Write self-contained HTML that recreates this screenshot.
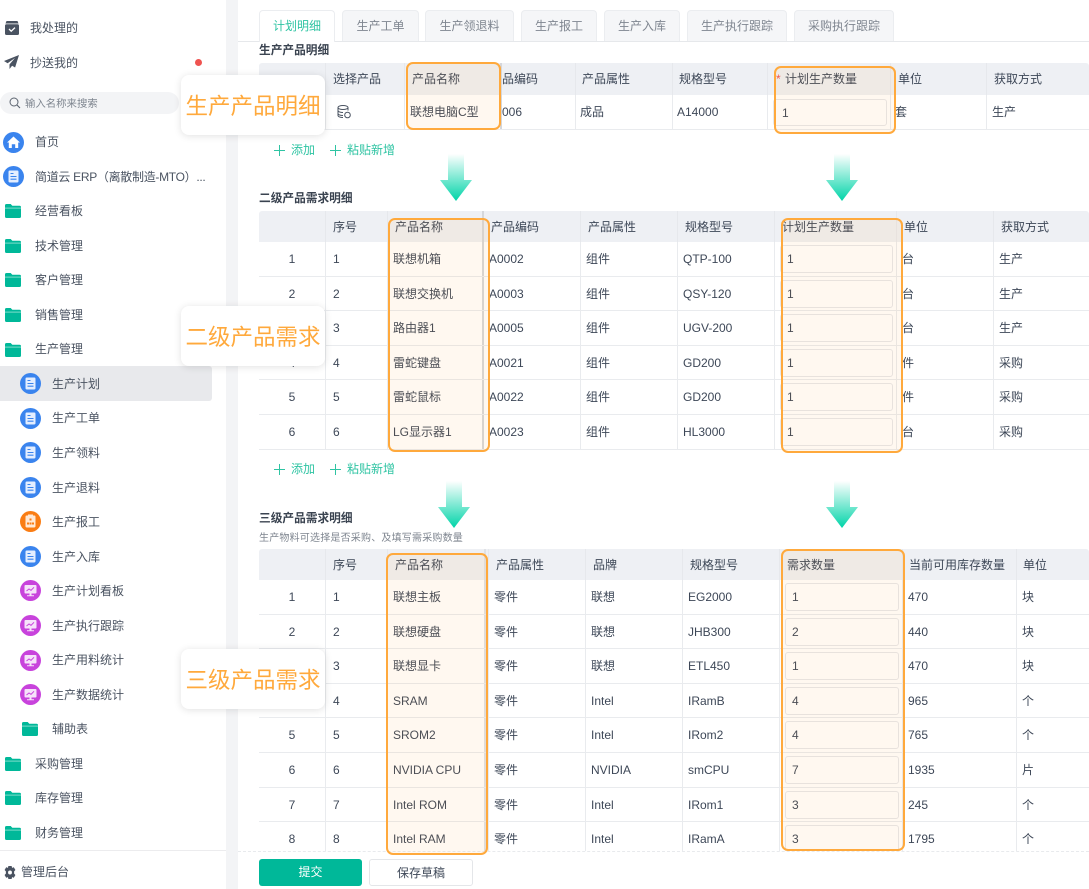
<!DOCTYPE html>
<html lang="zh"><head><meta charset="utf-8"><title>生产计划</title>
<style>
*{box-sizing:border-box}
html,body{margin:0;padding:0;background:#fff}
body{width:1089px;height:889px;overflow:hidden;position:relative;background:#fff;font:12px/1.2 "Liberation Sans","Noto Sans CJK SC",sans-serif;color:#3d4757;filter:blur(.35px)}
.a{position:absolute}
#gut{left:226px;top:0;width:12px;height:889px;background:#f3f4f6}
.s{position:absolute;white-space:nowrap;line-height:18px;margin-top:-9px;color:#4a5361}
.ic{position:absolute}
#hl{left:0;top:366px;width:212px;height:35px;background:#e8e9ec;border-radius:0 3px 3px 0}
#sr{left:0;top:92px;width:179px;height:22px;background:#f3f4f6;border-radius:11px}
.tab{position:absolute;top:10px;height:31px;background:#f5f6f8;border:1px solid #ebedf0;border-bottom:0;border-radius:4px 4px 0 0;text-align:center;line-height:30px;color:#7f8690;font-size:12px}
.tab.on{background:#fff;color:#2fc4a3;height:32px}
#tl{left:238px;top:41px;width:851px;height:1px;background:#e6e8eb}
.ttl{position:absolute;left:259px;font-weight:bold;font-size:11.7px;line-height:16px;color:#3a4350}
.t{position:absolute;left:259px;width:830px}
.r{display:flex;height:34.6px;border-bottom:1px solid #e9ebee;position:relative}
.r.h{background:#eef0f4;height:31px;border-bottom:0;border-radius:3px 3px 0 0}
#t1 .r.h{height:32px}
.r span{display:block;flex:none;white-space:nowrap;line-height:35px;padding-left:5px;border-right:1px solid #e9ebee;position:relative;height:100%}
.r.h span{padding-left:7px;line-height:33px;border-right-color:#e6e8ec}
.r span:first-child{text-align:center;padding:0}
.r span:nth-child(2){padding-left:7px}
#t1 span:nth-child(1),#t2 span:nth-child(1),#t3 span:nth-child(1){width:67px}
#t1 span:nth-child(2){width:79px}#t1 span:nth-child(3){width:97px;border-right:2px solid #d5d7db}#t1 span:nth-child(4){width:74px;padding-left:0}#t1 span:nth-child(5){width:97px}#t1 span:nth-child(6){width:95px}#t1 span:nth-child(7){width:123px}#t1 span:nth-child(8){width:96px}#t1 span:nth-child(9){width:102px;border:0}
#t2 span:nth-child(2){width:62px}#t2 span:nth-child(3){width:96px;border-right:2px solid #d5d7db}#t2 span:nth-child(4){width:97px}#t2 span:nth-child(5){width:97px}#t2 span:nth-child(6){width:97px}#t2 span:nth-child(7){width:122px}#t2 span:nth-child(8){width:97px}#t2 span:nth-child(9){width:95px;border:0}
#t3 span:nth-child(2){width:62px}#t3 span:nth-child(3){width:101px}#t3 span:nth-child(3)::after{content:"";position:absolute;left:96px;top:0;bottom:0;width:2px;background:#dfe1e5}#t3 span:nth-child(4){width:97px}#t3 span:nth-child(5){width:97px}#t3 span:nth-child(6){width:97px}#t3 span:nth-child(7){width:123px}#t3 span:nth-child(8){width:114px}#t3 span:nth-child(9){width:72px;border:0}
i.in{position:absolute;left:5px;top:3px;width:114px;height:28px;border:1px solid #e6e8eb;border-radius:3px;font-style:normal;line-height:26px;padding-left:6px;background:#fff}
#t2 i.in{width:113px}
.box{position:absolute;border:2.4px solid #ffa93c;border-radius:7px;background:rgba(255,170,60,.08);z-index:3}
.add{position:absolute;color:#2fc4a3;line-height:16px;white-space:nowrap;margin-top:-8px}
.pl{position:absolute;width:11px;height:11px;margin-top:-5.5px}
.pl:before,.pl:after{content:"";position:absolute;background:#2fc4a3}
.pl:before{left:0;top:5px;width:11px;height:1.3px}.pl:after{left:5px;top:0;width:1.3px;height:11px}
.co{position:absolute;left:181px;width:144px;height:60px;background:#fff;border-radius:8px;box-shadow:0 1px 8px rgba(0,0,0,.12);z-index:5;color:#ffa93c;font-size:22.5px;line-height:63px;text-align:center;white-space:nowrap}
.ar{position:absolute;z-index:4}
#bar{left:238px;top:851px;width:851px;height:38px;background:#fff;border-top:1px dashed #e8eaed;z-index:2}
.btn{position:absolute;top:859px;height:27px;border-radius:3px;text-align:center;line-height:27px;z-index:2}
#sbl{left:0;top:850px;width:226px;height:1px;background:#ececee}
</style></head><body>
<svg width="0" height="0" style="position:absolute">
<defs>
<linearGradient id="g" x1="0" y1="0" x2="0" y2="1"><stop offset="0" stop-color="#fff"/><stop offset="1" stop-color="#00d4a8"/></linearGradient>
<symbol id="f" viewBox="0 0 16 14"><path fill="#00b899" d="M0 1.500A1.500 1.500 0 0 1 1.500 0h4.200l1.600 1.800h7.200A1.500 1.500 0 0 1 16 3.300v9.200a1.500 1.500 0 0 1-1.500 1.500h-13A1.500 1.500 0 0 1 0 12.500z"/><path fill="#7fdccb" d="M0 3.600h16v1H0z"/></symbol>
<symbol id="d" viewBox="0 0 21 21"><circle cx="10.500" cy="10.500" r="10.500" fill="#3a84ee"/><rect x="5.500" y="4.500" width="10" height="12" rx="1.200" fill="#e4eeff"/><path stroke="#3a84ee" stroke-width="1.100" d="M7.500 7.500h3M7.500 10.500h6M7.500 13.200h6"/></symbol>
<symbol id="o" viewBox="0 0 21 21"><circle cx="10.500" cy="10.500" r="10.500" fill="#fa7d14"/><rect x="5.500" y="4.500" width="10" height="12" rx="1.200" fill="#ffe9d6"/><rect x="8" y="3.500" width="5" height="2" fill="#ffe9d6"/><path fill="#fa7d14" d="M9.500 7.500h2v2h-2zM7 11.500h2v2H7zM9.500 11.500h2v2h-2zM12 11.500h2v2h-2z"/></symbol>
<symbol id="p" viewBox="0 0 21 21"><circle cx="10.500" cy="10.500" r="10.500" fill="#c843dc"/><rect x="4.500" y="5" width="12" height="8.500" rx="1" fill="#f6e2fa"/><path fill="#f6e2fa" d="M9.500 13.500h2v1.800h2.500v1H7v-1h2.500z"/><path stroke="#c843dc" fill="none" d="M6.500 11l2.500-2 2 1.300 3-3"/></symbol>
</defs></svg>

<div class="a" id="gut"></div>

<svg class="ic" style="left:5px;top:21px" width="14" height="14" viewBox="0 0 14 14"><path fill="#4a5361" d="M1.500 0h11l1 2.500H.5z"/><rect y="3.200" width="14" height="10.800" rx="1.500" fill="#4a5361"/><path d="M4 8l2.200 2.200L10 6.600" stroke="#fff" stroke-width="1.300" fill="none"/></svg>
<div class="s" style="left:30px;top:28px">我处理的</div>
<svg class="ic" style="left:4px;top:55px" width="15" height="14" viewBox="0 0 15 14"><path fill="#4a5361" d="M15 0L0 6l3.600 2.200L11 3 5.500 9.400V14l2.600-3.300 3 1.800z"/></svg>
<div class="s" style="left:30px;top:62.500px">抄送我的</div>
<div class="a" style="left:195px;top:58.500px;width:7px;height:7px;border-radius:50%;background:#ef5350"></div>

<div class="a" id="sr"></div>
<svg class="ic" style="left:9px;top:97px" width="12" height="12" viewBox="0 0 12 12"><circle cx="5" cy="5" r="4" fill="none" stroke="#5c6470" stroke-width="1"/><path d="M8 8l3 3" stroke="#5c6470" stroke-width="1.100"/></svg>
<div class="s" style="left:25px;top:104.500px;font-size:10.400px;color:#7f8690">输入名称来搜索</div>

<svg class="ic" style="left:2.500px;top:131.500px" width="21" height="21" viewBox="0 0 21 21"><circle cx="10.500" cy="10.500" r="10.500" fill="#3a84ee"/><path fill="#fff" d="M10.500 4.500l6.500 6h-1.800v5.500h-3v-3.800H8.800V16h-3v-5.500H4z"/></svg>
<div class="s" style="left:35px;top:142px">首页</div>
<svg class="ic" style="left:2.500px;top:166px" width="21" height="21"><use href="#d"/></svg>
<div class="s" style="left:35px;top:176.500px;letter-spacing:-.3px">简道云 ERP（离散制造-MTO）...</div>

<svg class="ic" style="left:5px;top:204px" width="16" height="14"><use href="#f"/></svg><div class="s" style="left:35px;top:211px">经营看板</div>
<svg class="ic" style="left:5px;top:239px" width="16" height="14"><use href="#f"/></svg><div class="s" style="left:35px;top:245.500px">技术管理</div>
<svg class="ic" style="left:5px;top:273px" width="16" height="14"><use href="#f"/></svg><div class="s" style="left:35px;top:280px">客户管理</div>
<svg class="ic" style="left:5px;top:308px" width="16" height="14"><use href="#f"/></svg><div class="s" style="left:35px;top:314.500px">销售管理</div>
<svg class="ic" style="left:5px;top:343px" width="16" height="14"><use href="#f"/></svg><div class="s" style="left:35px;top:349px">生产管理</div>

<div class="a" id="hl"></div>
<svg class="ic" style="left:20px;top:373px" width="21" height="21"><use href="#d"/></svg><div class="s" style="left:52px;top:383.500px">生产计划</div>
<svg class="ic" style="left:20px;top:408px" width="21" height="21"><use href="#d"/></svg><div class="s" style="left:52px;top:418px">生产工单</div>
<svg class="ic" style="left:20px;top:442px" width="21" height="21"><use href="#d"/></svg><div class="s" style="left:52px;top:453px">生产领料</div>
<svg class="ic" style="left:20px;top:477px" width="21" height="21"><use href="#d"/></svg><div class="s" style="left:52px;top:487.500px">生产退料</div>
<svg class="ic" style="left:20px;top:511px" width="21" height="21"><use href="#o"/></svg><div class="s" style="left:52px;top:522px">生产报工</div>
<svg class="ic" style="left:20px;top:546px" width="21" height="21"><use href="#d"/></svg><div class="s" style="left:52px;top:556.500px">生产入库</div>
<svg class="ic" style="left:20px;top:580px" width="21" height="21"><use href="#p"/></svg><div class="s" style="left:52px;top:591px">生产计划看板</div>
<svg class="ic" style="left:20px;top:615px" width="21" height="21"><use href="#p"/></svg><div class="s" style="left:52px;top:625.500px">生产执行跟踪</div>
<svg class="ic" style="left:20px;top:650px" width="21" height="21"><use href="#p"/></svg><div class="s" style="left:52px;top:660px">生产用料统计</div>
<svg class="ic" style="left:20px;top:684px" width="21" height="21"><use href="#p"/></svg><div class="s" style="left:52px;top:694.500px">生产数据统计</div>
<svg class="ic" style="left:22px;top:722px" width="16" height="14"><use href="#f"/></svg><div class="s" style="left:52px;top:729px">辅助表</div>
<svg class="ic" style="left:5px;top:757px" width="16" height="14"><use href="#f"/></svg><div class="s" style="left:35px;top:763.500px">采购管理</div>
<svg class="ic" style="left:5px;top:791px" width="16" height="14"><use href="#f"/></svg><div class="s" style="left:35px;top:798px">库存管理</div>
<svg class="ic" style="left:5px;top:826px" width="16" height="14"><use href="#f"/></svg><div class="s" style="left:35px;top:832.500px">财务管理</div>

<div class="a" id="sbl"></div>
<svg class="ic" style="left:3.500px;top:865.500px" width="12" height="13" viewBox="0 0 11 12"><path fill="#4a5361" fill-rule="evenodd" d="M4 0h3l.4 1.700 1.600-.6 1.500 2.600-1.200 1.300v2l1.200 1.300L9 10.900l-1.600-.6L7 12H4l-.4-1.700-1.600.6L.5 8.300 1.700 7V5L.5 3.700 2 1.100l1.600.6zM5.500 4.200a1.800 1.800 0 1 0 0 3.600 1.800 1.800 0 0 0 0-3.600z"/></svg>
<div class="s" style="left:21px;top:872px">管理后台</div>

<div class="a" id="tl"></div>
<div class="tab on" style="left:259px;width:76px">计划明细</div>
<div class="tab" style="left:342px;width:77px">生产工单</div>
<div class="tab" style="left:425px;width:89px">生产领退料</div>
<div class="tab" style="left:521px;width:76px">生产报工</div>
<div class="tab" style="left:604px;width:76px">生产入库</div>
<div class="tab" style="left:687px;width:100px">生产执行跟踪</div>
<div class="tab" style="left:794px;width:100px">采购执行跟踪</div>

<div class="ttl" style="top:43px">生产产品明细</div>
<div class="t" id="t1" style="top:63px">
<div class="r h"><span></span><span>选择产品</span><span>产品名称</span><span>品编码</span><span style="padding-left:6px">产品属性</span><span style="padding-left:6px">规格型号</span><span style="padding-left:17px"><b style="position:absolute;left:8px;color:#ef5350;font-weight:normal">*</b>计划生产数量</span><span>单位</span><span>获取方式</span></div>
<div class="r"><span></span><span><svg style="position:absolute;left:11px;top:10px" width="14" height="14" viewBox="0 0 14 14" fill="none" stroke="#4a5361"><ellipse cx="6" cy="2.500" rx="5" ry="2"/><path d="M1 2.500v8c0 1.100 2.200 2 5 2M11 2.500v3M1 5.500c0 1.100 2.200 2 5 2M1 8.500c0 1.100 2.200 2 5 2"/><circle cx="10.500" cy="10" r="2.800"/></svg></span><span>联想电脑C型</span><span>006</span><span style="padding-left:4px">成品</span><span style="padding-left:4px">A14000</span><span><i class="in" style="padding-left:8px;top:4px;height:27px">1</i></span><span style="padding-left:4px">套</span><span>生产</span></div>
</div>
<div class="box" style="left:406px;top:62px;width:95px;height:68px"></div>
<div class="box" style="left:774px;top:66px;width:122px;height:68px"></div>
<div class="pl" style="left:274px;top:150px"></div><div class="add" style="left:291px;top:150px">添加</div>
<div class="pl" style="left:330px;top:150px"></div><div class="add" style="left:347px;top:150px">粘贴新增</div>

<div class="ttl" style="top:191px">二级产品需求明细</div>
<div class="t" id="t2" style="top:211px">
<div class="r h"><span></span><span>序号</span><span>产品名称</span><span>产品编码</span><span>产品属性</span><span>规格型号</span><span>计划生产数量</span><span>单位</span><span>获取方式</span></div>
<div class="r"><span>1</span><span>1</span><span>联想机箱</span><span>A0002</span><span>组件</span><span>QTP-100</span><span><i class="in">1</i></span><span>台</span><span>生产</span></div>
<div class="r"><span>2</span><span>2</span><span>联想交换机</span><span>A0003</span><span>组件</span><span>QSY-120</span><span><i class="in">1</i></span><span>台</span><span>生产</span></div>
<div class="r"><span>3</span><span>3</span><span>路由器1</span><span>A0005</span><span>组件</span><span>UGV-200</span><span><i class="in">1</i></span><span>台</span><span>生产</span></div>
<div class="r"><span>4</span><span>4</span><span>雷蛇键盘</span><span>A0021</span><span>组件</span><span>GD200</span><span><i class="in">1</i></span><span>件</span><span>采购</span></div>
<div class="r"><span>5</span><span>5</span><span>雷蛇鼠标</span><span>A0022</span><span>组件</span><span>GD200</span><span><i class="in">1</i></span><span>件</span><span>采购</span></div>
<div class="r"><span>6</span><span>6</span><span>LG显示器1</span><span>A0023</span><span>组件</span><span>HL3000</span><span><i class="in">1</i></span><span>台</span><span>采购</span></div>
</div>
<div class="box" style="left:388px;top:218px;width:102px;height:234px"></div>
<div class="box" style="left:781px;top:218px;width:122px;height:235px"></div>
<div class="pl" style="left:274px;top:469px"></div><div class="add" style="left:291px;top:469px">添加</div>
<div class="pl" style="left:330px;top:469px"></div><div class="add" style="left:347px;top:469px">粘贴新增</div>

<div class="ttl" style="top:511px">三级产品需求明细</div>
<div class="a" style="left:259px;top:532px;font-size:10px;line-height:13px;color:#7f8690;white-space:nowrap;letter-spacing:.2px">生产物料可选择是否采购、及填写需采购数量</div>
<div class="t" id="t3" style="top:549px">
<div class="r h"><span></span><span>序号</span><span>产品名称</span><span>产品属性</span><span>品牌</span><span>规格型号</span><span>需求数量</span><span style="padding-left:6px">当前可用库存数量</span><span style="padding-left:6px">单位</span></div>
<div class="r"><span>1</span><span>1</span><span>联想主板</span><span>零件</span><span>联想</span><span>EG2000</span><span><i class="in">1</i></span><span>470</span><span>块</span></div>
<div class="r"><span>2</span><span>2</span><span>联想硬盘</span><span>零件</span><span>联想</span><span>JHB300</span><span><i class="in">2</i></span><span>440</span><span>块</span></div>
<div class="r"><span>3</span><span>3</span><span>联想显卡</span><span>零件</span><span>联想</span><span>ETL450</span><span><i class="in">1</i></span><span>470</span><span>块</span></div>
<div class="r"><span>4</span><span>4</span><span>SRAM</span><span>零件</span><span>Intel</span><span>IRamB</span><span><i class="in">4</i></span><span>965</span><span>个</span></div>
<div class="r"><span>5</span><span>5</span><span>SROM2</span><span>零件</span><span>Intel</span><span>IRom2</span><span><i class="in">4</i></span><span>765</span><span>个</span></div>
<div class="r"><span>6</span><span>6</span><span>NVIDIA CPU</span><span>零件</span><span>NVIDIA</span><span>smCPU</span><span><i class="in">7</i></span><span>1935</span><span>片</span></div>
<div class="r"><span>7</span><span>7</span><span>Intel ROM</span><span>零件</span><span>Intel</span><span>IRom1</span><span><i class="in">3</i></span><span>245</span><span>个</span></div>
<div class="r"><span>8</span><span>8</span><span>Intel RAM</span><span>零件</span><span>Intel</span><span>IRamA</span><span><i class="in">3</i></span><span>1795</span><span>个</span></div>
</div>

<div class="a" id="bar"></div>
<div class="btn" style="left:259px;width:103px;background:#00b899;color:#fff">提交</div>
<div class="btn" style="left:369px;width:104px;background:#fff;border:1px solid #e4e6e9">保存草稿</div>
<div class="box" style="left:386px;top:553px;width:102px;height:302px"></div>
<div class="box" style="left:781px;top:549px;width:124px;height:302px"></div>

<div class="co" style="top:75px">生产产品明细</div>
<div class="co" style="top:306px">二级产品需求</div>
<div class="co" style="top:649px">三级产品需求</div>

<svg class="ar" style="left:440px;top:154px" width="32" height="47" viewBox="0 0 32 47"><path fill="url(#g)" d="M8 0h16v26h8L16 47 0 26h8z"/></svg>
<svg class="ar" style="left:826px;top:154px" width="32" height="47" viewBox="0 0 32 47"><path fill="url(#g)" d="M8 0h16v26h8L16 47 0 26h8z"/></svg>
<svg class="ar" style="left:438px;top:481px" width="32" height="47" viewBox="0 0 32 47"><path fill="url(#g)" d="M8 0h16v26h8L16 47 0 26h8z"/></svg>
<svg class="ar" style="left:826px;top:481px" width="32" height="47" viewBox="0 0 32 47"><path fill="url(#g)" d="M8 0h16v26h8L16 47 0 26h8z"/></svg>
</body></html>
